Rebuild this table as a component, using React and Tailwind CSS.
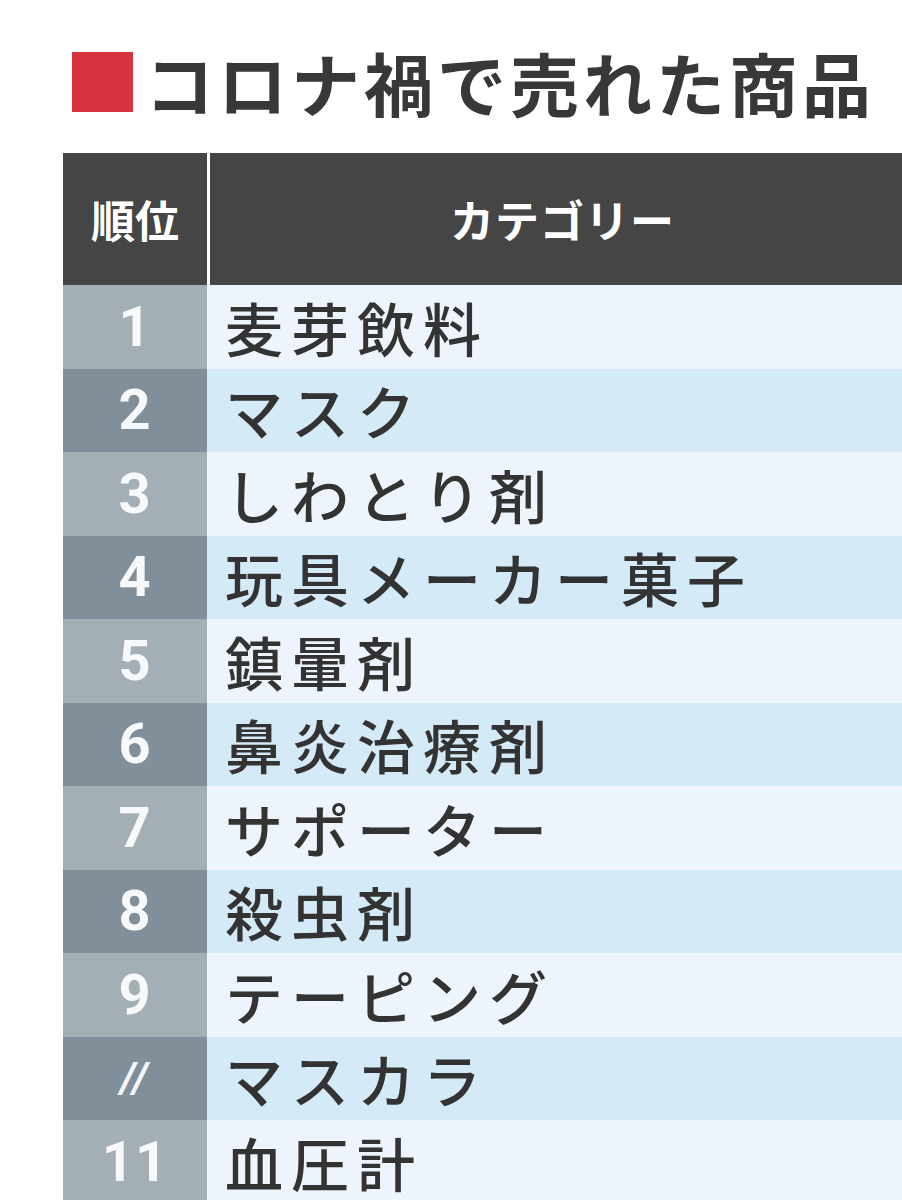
import React from "react";

const rows = [
  { rank: "1", name: "麦芽飲料" },
  { rank: "2", name: "マスク" },
  { rank: "3", name: "しわとり剤" },
  { rank: "4", name: "玩具メーカー菓子" },
  { rank: "5", name: "鎮暈剤" },
  { rank: "6", name: "鼻炎治療剤" },
  { rank: "7", name: "サポーター" },
  { rank: "8", name: "殺虫剤" },
  { rank: "9", name: "テーピング" },
  { rank: "//", name: "マスカラ", ditto: true },
  { rank: "11", name: "血圧計" },
];

const jp = { fontFamily: '"Noto Sans CJK JP", "Noto Sans", sans-serif' };
const num = { fontFamily: 'Roboto, "Liberation Sans", sans-serif' };

export default function App() {
  return (
    <div className="w-[902px] h-[1200px] overflow-hidden bg-white" style={jp}>
      {/* Title */}
      <div className="flex items-start pl-[72px] pt-[48px] h-[153px]">
        <div className="w-[61px] h-[60px] bg-[#d6343f] mt-[4px]" />
        <h1 className="ml-[12px] text-[69px] leading-none font-bold tracking-[4px] text-[#383838] whitespace-nowrap">
          コロナ禍で売れた商品
        </h1>
      </div>

      {/* Table */}
      <div className="ml-[63px]">
        <div className="flex h-[132px] bg-white">
          <div className="w-[144px] bg-[#454545] flex items-center justify-center">
            <span className="text-white font-bold text-[44px] leading-none">順位</span>
          </div>
          <div className="w-[3px] bg-white" />
          <div className="flex-1 bg-[#454545] flex items-center pl-[240px]">
            <span className="text-white font-bold text-[44px] leading-none tracking-[1px] whitespace-nowrap">
              カテゴリー
            </span>
          </div>
        </div>

        {rows.map((r, i) => {
          const odd = i % 2 === 0;
          return (
            <div key={i} className="flex h-[83.5px]">
              <div
                className={`w-[144px] flex items-center justify-center ${
                  odd ? "bg-[#a3aeb5]" : "bg-[#808f99]"
                }`}
              >
                {r.ditto ? (
                  <span
                    className="text-[#f4f6f7] font-bold italic text-[42px] leading-none tracking-[2px]"
                    style={num}
                  >
                    //
                  </span>
                ) : (
                  <span
                    className="text-[#f7f8f9] font-bold text-[56px] leading-none tracking-[1px]"
                    style={num}
                  >
                    {r.rank}
                  </span>
                )}
              </div>
              <div
                className={`flex-1 flex items-center pl-[18px] ${
                  odd ? "bg-[#edf4fb]" : "bg-[#d5eaf7]"
                }`}
              >
                <span className="text-[58px] leading-none font-medium tracking-[8px] text-[#333333] whitespace-nowrap">
                  {r.name}
                </span>
              </div>
            </div>
          );
        })}
      </div>
    </div>
  );
}
